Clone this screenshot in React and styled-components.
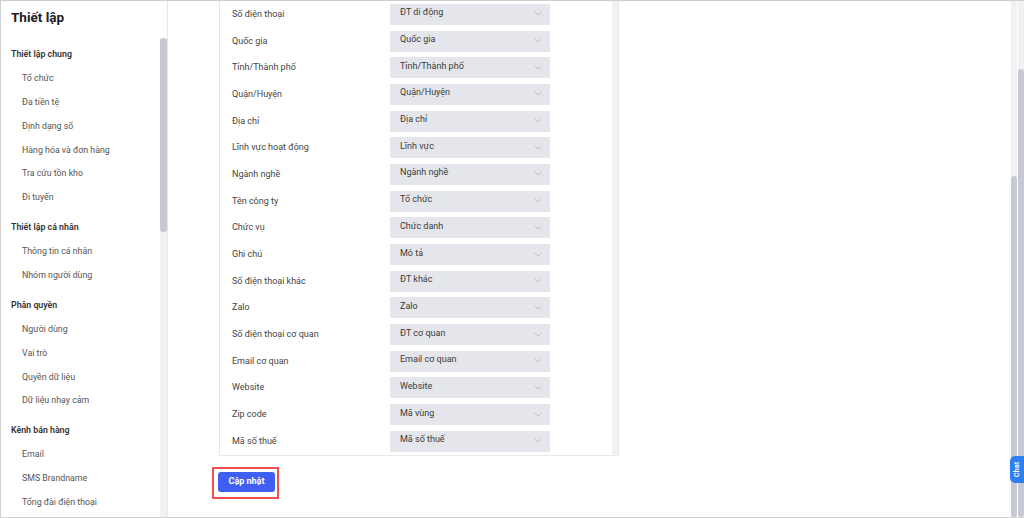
import React from "react";
import styled, { createGlobalStyle } from "styled-components";

const Global = createGlobalStyle`
  html, body { margin: 0; padding: 0; background: #fff; }
  body { font-family: Roboto, "Noto Sans", "Liberation Sans", sans-serif; }
  * { box-sizing: border-box; }
`;

const Frame = styled.div`
  position: relative;
  width: 1024px;
  height: 518px;
  border-top: 1px solid #cfcfcf;
  border-left: 1px solid #cfcfcf;
  border-bottom: 1px solid #cfcfcf;
  display: flex;
  overflow: hidden;
  background: #fff;
`;

const Sidebar = styled.aside`
  width: 167px;
  flex: none;
  display: flex;
  flex-direction: column;
  border-right: 1px solid #e6e6e6;
`;

const Title = styled.div`
  height: 37px;
  flex: none;
  display: flex;
  align-items: center;
  padding-left: 10px;
  padding-bottom: 5px;
  font-size: 13.5px;
  font-weight: 700;
  color: #222;
`;

const SideBody = styled.div`
  flex: 1;
  display: flex;
  min-height: 0;
`;

const Menu = styled.nav`
  flex: 1;
  padding-top: 4px;
  display: flex;
  flex-direction: column;
`;

const Group = styled.div`
  display: flex;
  flex-direction: column;
  & + & { margin-top: 6px; }
`;

const GroupHead = styled.div`
  height: 23.9px;
  display: flex;
  align-items: center;
  padding-left: 10px;
  font-size: 8.8px;
  font-weight: 600;
  color: #333;
`;

const Item = styled.div`
  height: 23.9px;
  display: flex;
  align-items: center;
  padding-left: 21px;
  font-size: 8.8px;
  color: #555;
`;

const Track = styled.div`
  width: ${(p) => p.$w || 6}px;
  flex: none;
  background: #f1f1f3;
  display: flex;
  flex-direction: column;
  padding-top: ${(p) => p.$top || 0}px;
`;

const Thumb = styled.div`
  width: 100%;
  height: ${(p) => (p.$h ? p.$h + "px" : "100%")};
  flex: ${(p) => (p.$h ? "none" : "1")};
  background: #c6c9d4;
  border-radius: 3px;
`;

const Main = styled.main`
  flex: 1;
  display: flex;
  flex-direction: column;
  padding-left: 51px;
`;

const Card = styled.section`
  width: 400px;
  border: 1px solid #e8e8ea;
  border-top: none;
  display: flex;
`;

const Rows = styled.div`
  flex: 1;
  padding-left: 12px;
  display: flex;
  flex-direction: column;
`;

const Row = styled.div`
  height: 26.6875px;
  display: flex;
  align-items: center;
`;

const Label = styled.div`
  width: 158px;
  flex: none;
  font-size: 9px;
  color: #444;
  margin-top: -1px;
`;

const Select = styled.div`
  width: 160px;
  height: 21px;
  background: #e5e6eb;
  display: flex;
  align-items: center;
  justify-content: space-between;
  padding: 0 8px 1px 10px;
  font-size: 9px;
  color: #3a3a3a;
  span { margin-top: -3px; }
`;

const CardTrack = styled.div`
  width: 6px;
  flex: none;
  background: #f2f2f4;
`;

const Highlight = styled.div`
  align-self: flex-start;
  margin-top: 11px;
  margin-left: -7px;
  border: 2px solid #ef4f4f;
  padding: 3px 2px 5px 4px;
`;

const Button = styled.button`
  width: 57px;
  height: 20px;
  border: none;
  border-radius: 3px;
  background: #3f5ef2;
  color: #fff;
  font-family: inherit;
  font-size: 9px;
  font-weight: 700;
  padding: 0 0 2px;
  display: block;
`;

const Bars = styled.div`
  display: flex;
  gap: 1px;
  flex: none;
`;

const ChatTab = styled.div`
  position: absolute;
  right: 0;
  top: 455px;
  width: 14px;
  height: 27px;
  background: #2f7ff0;
  border-radius: 5px 0 0 5px;
  display: flex;
  align-items: center;
  justify-content: center;
  color: #fff;
  font-size: 7.5px;
  font-weight: 600;
  span { transform: rotate(-90deg); display: block; white-space: nowrap; }
`;

const Chevron = () => (
  <svg width="8" height="5" viewBox="0 0 8 5" fill="none">
    <path d="M0.5 0.8 L4 4 L7.5 0.8" stroke="#b9bcc6" strokeWidth="0.9" />
  </svg>
);

const menu = [
  { head: "Thiết lập chung", items: ["Tổ chức", "Đa tiền tệ", "Định dạng số", "Hàng hóa và đơn hàng", "Tra cứu tồn kho", "Đi tuyến"] },
  { head: "Thiết lập cá nhân", items: ["Thông tin cá nhân", "Nhóm người dùng"] },
  { head: "Phân quyền", items: ["Người dùng", "Vai trò", "Quyền dữ liệu", "Dữ liệu nhạy cảm"] },
  { head: "Kênh bán hàng", items: ["Email", "SMS Brandname", "Tổng đài điện thoại"] },
];

const fields = [
  ["Số điện thoại", "ĐT di động"],
  ["Quốc gia", "Quốc gia"],
  ["Tỉnh/Thành phố", "Tỉnh/Thành phố"],
  ["Quận/Huyện", "Quận/Huyện"],
  ["Địa chỉ", "Địa chỉ"],
  ["Lĩnh vực hoạt động", "Lĩnh vực"],
  ["Ngành nghề", "Ngành nghề"],
  ["Tên công ty", "Tổ chức"],
  ["Chức vụ", "Chức danh"],
  ["Ghi chú", "Mô tả"],
  ["Số điện thoại khác", "ĐT khác"],
  ["Zalo", "Zalo"],
  ["Số điện thoại cơ quan", "ĐT cơ quan"],
  ["Email cơ quan", "Email cơ quan"],
  ["Website", "Website"],
  ["Zip code", "Mã vùng"],
  ["Mã số thuế", "Mã số thuế"],
];

export default function App() {
  return (
    <>
      <Global />
      <Frame>
        <Sidebar>
          <Title>Thiết lập</Title>
          <SideBody>
            <Menu>
              {menu.map((g) => (
                <Group key={g.head}>
                  <GroupHead>{g.head}</GroupHead>
                  {g.items.map((it) => (
                    <Item key={it}>{it}</Item>
                  ))}
                </Group>
              ))}
            </Menu>
            <Track $w={7}>
              <Thumb $h={194} />
            </Track>
          </SideBody>
        </Sidebar>
        <Main>
          <Card>
            <Rows>
              {fields.map(([l, v]) => (
                <Row key={l}>
                  <Label>{l}</Label>
                  <Select>
                    <span>{v}</span>
                    <Chevron />
                  </Select>
                </Row>
              ))}
            </Rows>
            <CardTrack />
          </Card>
          <Highlight>
            <Button>Cập nhật</Button>
          </Highlight>
        </Main>
        <Bars>
          <Track $w={6} $top={175}>
            <Thumb />
          </Track>
          <Track $w={6} $top={68}>
            <Thumb />
          </Track>
        </Bars>
        <ChatTab>
          <span>Chat</span>
        </ChatTab>
      </Frame>
    </>
  );
}
